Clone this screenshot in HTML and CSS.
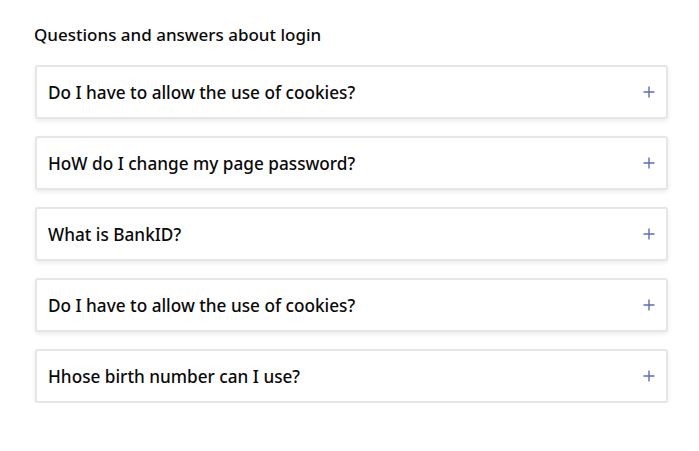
FILE: index.html
```html
<!DOCTYPE html>
<html lang="en">
<head>
<meta charset="utf-8">
<title>FAQ</title>
<link rel="stylesheet" href="styles.css">
</head>
<body>
<section class="faq">
  <h2 class="faq-title">Questions and answers about login</h2>
  <ul class="faq-list">
    <li class="faq-item"><span class="faq-q">Do I have to allow the use of cookies?</span><svg class="plus" viewBox="0 0 12 12" width="12" height="12"><path d="M6 0.5v11M0.5 6h11" stroke="currentColor" stroke-width="1.4" fill="none"/></svg></li>
    <li class="faq-item"><span class="faq-q">HoW do I change my page password?</span><svg class="plus" viewBox="0 0 12 12" width="12" height="12"><path d="M6 0.5v11M0.5 6h11" stroke="currentColor" stroke-width="1.4" fill="none"/></svg></li>
    <li class="faq-item"><span class="faq-q">What is BankID?</span><svg class="plus" viewBox="0 0 12 12" width="12" height="12"><path d="M6 0.5v11M0.5 6h11" stroke="currentColor" stroke-width="1.4" fill="none"/></svg></li>
    <li class="faq-item"><span class="faq-q">Do I have to allow the use of cookies?</span><svg class="plus" viewBox="0 0 12 12" width="12" height="12"><path d="M6 0.5v11M0.5 6h11" stroke="currentColor" stroke-width="1.4" fill="none"/></svg></li>
    <li class="faq-item"><span class="faq-q">Hhose birth number can I use?</span><svg class="plus" viewBox="0 0 12 12" width="12" height="12"><path d="M6 0.5v11M0.5 6h11" stroke="currentColor" stroke-width="1.4" fill="none"/></svg></li>
  </ul>
</section>
</body>
</html>
```
FILE: styles.css
```css
html, body {
  margin: 0;
  padding: 0;
  background: #ffffff;
}
body {
  font-family: "Noto Sans", "Open Sans", sans-serif;
  color: #0a0a0a;
}
.faq {
  padding: 22px 31px 0 34px;
}
.faq-title {
  margin: 0 0 17px 0;
  font-size: 17px;
  font-weight: 500;
  line-height: 26px;
}
.faq-list {
  list-style: none;
  margin: 0;
  padding: 0 0 0 1px;
  display: flex;
  flex-direction: column;
  gap: 17px;
}
.faq-item {
  display: flex;
  align-items: center;
  justify-content: space-between;
  height: 54px;
  box-sizing: border-box;
  padding: 0 11px 0 11px;
  border: 2px solid #e6e6ea;
  border-radius: 3px;
  box-shadow: 0 2px 4px rgba(0, 0, 0, 0.08);
  background: #fff;
}
.faq-q {
  font-size: 17.2px;
  font-weight: 500;
}
.plus {
  color: #5c6bc0;
  flex: none;
}
```
